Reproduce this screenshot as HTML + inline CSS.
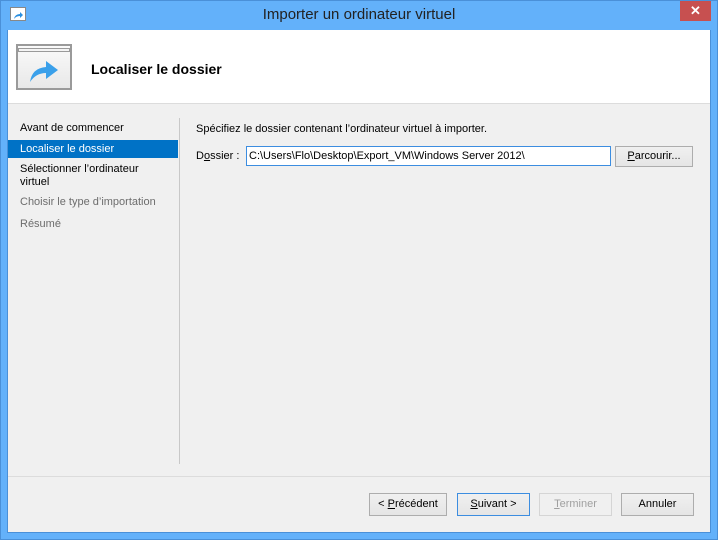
<!DOCTYPE html>
<html><head><meta charset="utf-8"><style>
*{margin:0;padding:0;box-sizing:border-box}
body{width:718px;height:540px;background:#63b1fa;font-family:"Liberation Sans",sans-serif;font-size:11px;color:#000;position:relative;overflow:hidden}
.abs{position:absolute}
.btn{position:absolute;top:493px;height:23px;border:1px solid #adadad;background:linear-gradient(#f0f0f0,#e5e5e5);text-align:center;line-height:21px;font-size:11px}
u{text-decoration:underline}
</style></head><body>
<div class="abs" style="left:0;top:0;width:718px;height:540px;border:1px solid #4a90d8"></div>
<div class="abs" style="left:10px;top:7px;width:16px;height:14px;background:#fff;border:1px solid #888"></div>
<svg class="abs" style="left:12px;top:10px" width="12" height="10"><path d="M2 9 Q3 4 8 4 L8 2 L11 5 L8 8 L8 6 Q4 6 2 9Z" fill="#2a8fe0"/></svg>
<div class="abs" style="left:0;top:6px;width:718px;text-align:center;font-size:15px;color:#222">Importer un ordinateur virtuel</div>
<div class="abs" style="left:680px;top:1px;width:31px;height:20px;background:#c75050;color:#fff;text-align:center;font-size:13px;font-weight:bold;line-height:20px">✕</div>
<div class="abs" style="left:7px;top:30px;width:704px;height:503px;background:#f0f0f0;border:1px solid #4a90d8;border-top:none"></div>
<div class="abs" style="left:8px;top:30px;width:702px;height:74px;background:#fff;border-bottom:1px solid #dcdcdc"></div>
<div class="abs" style="left:16px;top:44px;width:56px;height:46px;border:2px solid #9a9a9a;background:linear-gradient(#fafafa,#e8e8e8)"></div>
<div class="abs" style="left:18px;top:48px;width:52px;height:4px;border:1px solid #9a9a9a;background:#f4f4f4"></div>
<svg class="abs" style="left:28px;top:56px" width="32" height="28"><path d="M2 26 Q4 12 18 11 L18 5 L30 14 L18 23 L18 17 Q8 17 2 26Z" fill="#3aa0ea"/></svg>
<div class="abs" style="left:91px;top:61px;font-size:14px;font-weight:bold">Localiser le dossier</div>
<div class="abs" style="left:20px;top:122px">Avant de commencer</div>
<div class="abs" style="left:8px;top:140px;width:170px;height:18px;background:#0072c6;color:#fff;padding:3px 0 0 12px">Localiser le dossier</div>
<div class="abs" style="left:20px;top:163px;line-height:13px">Sélectionner l’ordinateur<br>virtuel</div>
<div class="abs" style="left:20px;top:196px;color:#6d6d6d">Choisir le type d’importation</div>
<div class="abs" style="left:20px;top:218px;color:#6d6d6d">Résumé</div>
<div class="abs" style="left:179px;top:118px;width:1px;height:346px;background:#c8c8c8"></div>
<div class="abs" style="left:196px;top:123px">Spécifiez le dossier contenant l’ordinateur virtuel à importer.</div>
<div class="abs" style="left:196px;top:150px">D<u>o</u>ssier :</div>
<div class="abs" style="left:246px;top:146px;width:365px;height:20px;background:#fff;border:1px solid #3c8de0;padding:3px 0 0 2px">C:\Users\Flo\Desktop\Export_VM\Windows Server 2012\</div>
<div class="btn" style="left:615px;top:146px;width:78px;height:21px;line-height:19px"><u>P</u>arcourir...</div>
<div class="abs" style="left:8px;top:476px;width:702px;height:1px;background:#dcdcdc"></div>
<div class="btn" style="left:369px;width:78px">&lt; <u>P</u>récédent</div>
<div class="btn" style="left:457px;width:73px;border-color:#3c8de0"><u>S</u>uivant &gt;</div>
<div class="btn" style="left:539px;width:73px;border-color:#d5d5d5;background:#f0f0f0;color:#a0a0a0"><u>T</u>erminer</div>
<div class="btn" style="left:621px;width:73px">Annuler</div>
</body></html>
